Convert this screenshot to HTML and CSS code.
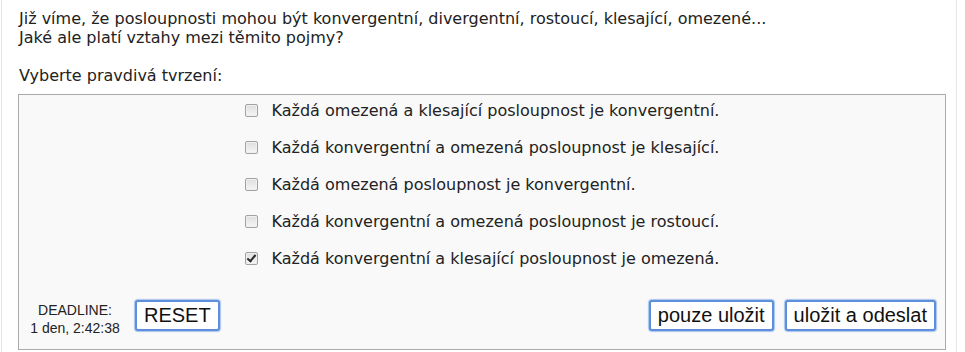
FILE: index.html
```html
<!DOCTYPE html>
<html lang="cs">
<head>
    <meta charset="UTF-8">
    <meta name="viewport" content="width=device-width, initial-scale=1.0">
    <title>Posloupnosti - test</title>
    <link rel="stylesheet" href="styles.css">
</head>
<body>
    <div class="page">
        <div class="question">
            Již víme, že posloupnosti mohou být konvergentní, divergentní, rostoucí, klesající, omezené...<br>
            Jaké ale platí vztahy mezi těmito pojmy?<br>
            <br>
            Vyberte pravdivá tvrzení:
        </div>

        <form class="answer-box">
            <div class="options">
                <ul>
                    <li><label><input type="checkbox"> Každá omezená a klesající posloupnost je konvergentní.</label></li>
                    <li><label><input type="checkbox"> Každá konvergentní a omezená posloupnost je klesající.</label></li>
                    <li><label><input type="checkbox"> Každá omezená posloupnost je konvergentní.</label></li>
                    <li><label><input type="checkbox"> Každá konvergentní a omezená posloupnost je rostoucí.</label></li>
                    <li><label><input type="checkbox" checked> Každá konvergentní a klesající posloupnost je omezená.</label></li>
                </ul>
            </div>
            <div class="controls">
                <div class="deadline">DEADLINE:<br>1 den, 2:42:38</div>
                <button type="reset" class="btn btn-reset">RESET</button>
                <div class="spacer"></div>
                <button type="button" class="btn">pouze uložit</button>
                <button type="button" class="btn">uložit a odeslat</button>
            </div>
        </form>
    </div>
</body>
</html>
```

FILE: styles.css
```css
body {
    margin: 0;
    padding: 0;
    background: #fff;
    color: #222;
    font-family: 'DejaVu Sans', Verdana, sans-serif;
    font-size: 16px;
    line-height: 19px;
}
.page {
    margin-left: 1px;
    width: 928px;
    min-height: 352px;
    padding: 9px 10px 0 16px;
    border-left: 1px solid #e6e6e6;
    border-right: 1px solid #e6e6e6;
}
.question {
    margin-left: 1px;
    margin-bottom: 9px;
}
.answer-box {
    margin: 0;
    background-color: #f9f9f9;
    border: 1px solid #aaaaaa;
}
.options {
    text-align: center;
    padding-top: 6px;
}
.options ul {
    display: inline-block;
    list-style: none;
    margin: 0;
    padding: 0;
    text-align: left;
}
.options li {
    margin-bottom: 18px;
}
.options label {
    display: flex;
    align-items: center;
}
/* old style grey checkbox */
.options input[type="checkbox"] {
    appearance: none;
    -webkit-appearance: none;
    position: relative;
    width: 13px;
    height: 13px;
    margin: 0 14px 0 0;
    border: 1px solid #a2a2a2;
    border-radius: 2px;
    background: linear-gradient(#dedede, #f6f6f6);
    box-shadow: inset 0 0 0 1px #f0f0f0;
}
.options input[type="checkbox"]:checked::after {
    content: "";
    position: absolute;
    left: 3px;
    top: 0px;
    width: 3px;
    height: 7px;
    border-right: 2px solid #2a2a2a;
    border-bottom: 2px solid #2a2a2a;
    transform: rotate(40deg);
}
.controls {
    display: flex;
    align-items: flex-start;
    margin-top: 14px;
    padding: 0 9px 12px 6px;
}
.deadline {
    width: 100px;
    padding-top: 1px;
    text-align: center;
    font-family: 'Liberation Sans', Arial, sans-serif;
    font-size: 14px;
    line-height: 18px;
    color: #222;
}
.spacer {
    flex-grow: 1;
}
.btn {
    font-family: 'Liberation Sans', Arial, sans-serif;
    font-size: 20px;
    height: 31px;
    padding: 0 7px;
    background-color: #fff;
    color: #111;
    border: 2px solid #5d8fdc;
    border-radius: 3px;
    box-shadow: 0 0 1px 1px #a9c4ee;
    margin-left: 11px;
}
.btn-reset {
    margin-left: 10px;
}
```
